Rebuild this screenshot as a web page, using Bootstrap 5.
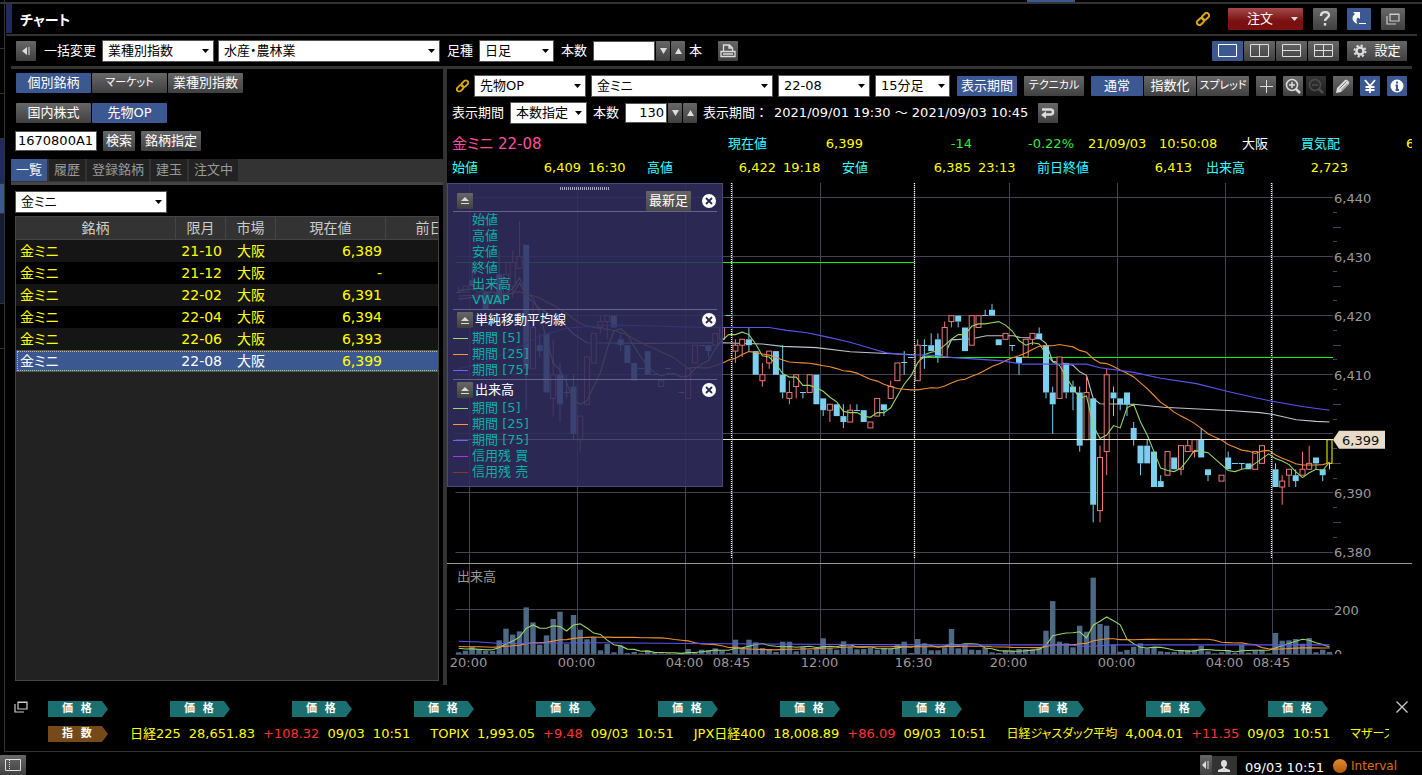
<!DOCTYPE html>
<html lang="ja">
<head>
<meta charset="utf-8">
<meta name="viewport" content="width=device-width, initial-scale=1">
<title>チャート</title>
<link href="https://cdn.jsdelivr.net/npm/bootstrap@5.3.0/dist/css/bootstrap.min.css" rel="stylesheet">
<style>
:root{--line:#333;--blue:#3c5890;--navy:#202a5c}
body{background:#000;color:#fff;font:13px/20px "DejaVu Sans","Noto Sans CJK JP",sans-serif;font-feature-settings:"palt";overflow:hidden}
button,input,select{font-family:inherit;font-feature-settings:inherit}
svg{display:block}
.rail{width:5px;border-right:1px solid var(--line);padding-top:4px}
.rail div{border-bottom:1px solid var(--line);height:45px}
.rail .r1{background:#202a5c}
.rail .r2{background:#3c5890;height:30px}
.rail .r3{background:#151a35;height:90px}
.strip{height:4px;border-bottom:2px solid var(--line);padding-left:1027px;margin-left:-5px}
.strip div{width:48px;height:2px;background:var(--blue)}
.titlebar{height:32px;margin:0 5px 0 1px;padding-right:12px;border-bottom:2px solid var(--line)}
.titlebar h1{font-size:14px;line-height:32px;height:29px;font-weight:700;border-left:6px solid var(--navy);padding-left:8px;margin:0}
.titlebar .acts{gap:10px}
.b{border:0;padding:0;height:20px;line-height:20px;font-size:13px;color:#fff;text-align:center;background:linear-gradient(#676767,#404040);white-space:nowrap;display:flex;align-items:center;justify-content:center;flex:none;border-radius:1px}
.b.on{background:var(--blue)}
.b.red{background:linear-gradient(#a34a4a,#7a1010 60%);width:75px;height:22px;gap:18px;padding-left:14px}
.b.dim{opacity:.5}
.b.kana{font-size:11px}
.w12{width:12px}.w14{width:14px}.w20{width:20px}.w24{width:24px;height:22px}.w26{width:26px}.w31{width:31px}.w32{width:32px}.w52{width:52px}.w60{width:60px}.w75{width:75px}
.g1{gap:1px}.g3{gap:3px}.g5{gap:5px}.g6{gap:6px}.g7{gap:7px}
.sel{appearance:none;border:1px solid #555;border-radius:0;height:22px;line-height:20px;font-size:13px;padding:0 16px 0 5px;color:#000;flex:none;
background:#fff url("data:image/svg+xml,%3Csvg xmlns='http://www.w3.org/2000/svg' width='7' height='4'%3E%3Cpath d='M0 0h7L3.5 4z'/%3E%3C/svg%3E") no-repeat right 4px center}
.inp{border:1px solid #555;height:20px;padding:0 2px;font-size:13px;background:#fff;color:#000;flex:none;border-radius:0}
.s75{width:75px}.s77{width:77px}.s92{width:92px}.s112{width:112px}.s152{width:152px}.s182{width:182px}.s222{width:222px}
.i42{width:42px}.i62{width:62px}.i82{width:82px}
.toolbar{height:33px;padding:0 5px 0 5px;margin:0 10px 0 6px;border-bottom:3px solid var(--line)}
.toolbar label{padding:0 6px 0 7px}
.leftpane{width:436px;margin-left:6px;border-right:4px solid var(--line)}
.leftpane .rows{padding:4px 5px 8px;display:grid;gap:10px}
.leftpane .rows .find{margin:-2px 0 0 -1px}
.tabsbar{background:#333;height:26px;border-bottom:3px solid #444;gap:2px}
.tabsbar button{border:0;background:#222;color:#999;font-size:13px;line-height:22px;height:22px;padding:0 5px}
.tabsbar button.on{background:var(--blue);color:#fff}
.pick{padding:6px 4px 0}
.listbox{margin:3px 4px 4px;border:1px solid #444;background:#222;overflow:hidden}
.grid{table-layout:fixed;width:472px;font-size:14px;line-height:22px;border-collapse:separate;border-spacing:0}
.grid th{font-weight:400;height:22px;background:#333;color:#ccc;text-align:center;padding:0;border-right:1px solid #444;border-bottom:1px solid #444}
.grid td{height:22px;padding:0 4px;color:#ff0;background:#151515}
.grid tr:nth-child(even) td{background:#000}
.grid td:nth-child(3){padding-left:11px}
.grid td:nth-child(2){padding-left:0}
.grid tr.cur td{background:var(--blue);color:#fff}
.grid tr.cur td:nth-child(4){color:#ff0}
.grid tr.cur{outline:1px dotted #d8b878;outline-offset:-2px}
.rightpane{min-width:0;margin-right:10px}
.chartbar{padding:4px 5px 0 5px;height:30px}
.chartbar.second{padding-top:0;height:27px}
.wide{font-feature-settings:normal}
.quotes{padding:6px 0 3px}
.quote{height:24px;line-height:24px;padding-left:5px;white-space:nowrap;overflow:hidden;color:#ff0}
.quote span{flex:none}
.cy{color:#3ff}.gr{color:#3e3}
.pink{color:#ff4fa0;width:276px;font-size:15px}
.q55{width:55px}.q66{width:66px;padding-left:7px}.q59{width:59px}.q74{width:74px}.q78{width:78px}.q85{width:85px}.q64{width:64px}.q70{width:70px}.q92{width:92px}.q102{width:102px}.q109{width:109px}.q71{width:71px}.q83{width:83px}.q105{width:105px}
.pl14{padding-left:14px}
.chart{min-height:300px}
.legendbox{top:0;left:0;width:276px;height:304px;padding:0 5px;background:rgba(49,46,94,.88);border:1px solid #4a4880;color:#fff}
.legendbox .grip{left:112px;top:3px;width:50px;height:3px;background:repeating-linear-gradient(90deg,#aab 0 1px,transparent 1px 2px)}
.legendbox .hd{height:20px;gap:2px;padding:0 1px 0 4px}
.legendbox .hd.first{height:27px;padding-top:6px}
.legendbox ul{list-style:none;margin:0;padding:0 0 1px;line-height:16px;color:#0aafa5;border-bottom:1px solid #66648f}
.legendbox section:first-of-type ul{border-top:1px solid #66648f}
.legendbox section:last-of-type ul{border:0}
.legendbox li{display:flex;align-items:center;gap:4px;height:16px}
.legendbox li i{width:15px;height:1px}
.c5{background:#9d6}.c25{background:#f93}.c75{background:#66f}.cb{background:#a3e}.cs{background:#853d18}
.x{border:0;padding:0;background:none}
.b.w16{width:16px;height:16px}
.b.w45{width:45px;margin-right:9px;background:linear-gradient(#666,#484848)}
.ticker{height:67px;border-bottom:1px solid var(--line);padding:16px 14px 0 9px;gap:20px}
.tag{width:60px;height:16px;line-height:16px;font-size:11px;font-weight:700;padding-left:14px;white-space:pre;background:#1a7070;color:#fff;clip-path:polygon(0 0,54px 0,100% 50%,54px 100%,0 100%);flex:none}
.tag.br{background:#754a18}
.tags{gap:62px;overflow:hidden;height:16px}
.second-line{margin-top:7px}
.idx{gap:20px;overflow:hidden;white-space:nowrap;color:#ff0;margin-left:22px;margin-right:7px}
.idx>span{flex:none;display:flex;gap:8px}
.idx b{font-weight:400}
.idx .kana{font-size:12px}
.idx em{color:#f33;font-style:normal}
.ticker .close{margin-left:-20px}
.foot{height:23px;padding-right:25px}
.foot .dot{width:14px;height:14px;border-radius:50%;background:linear-gradient(#e08a30,#b05a08);margin:0 4px 0 9px}
.foot .int{color:#dd7008;font-size:12px}
.foot .u{width:25px;height:19px;background:#333}
text{font-size:13px;fill:#999}
</style>
</head>
<body>
<div class="d-flex flex-column vh-100">
<div class="d-flex flex-grow-1" style="min-height:0">
<div class="rail flex-shrink-0" aria-hidden="true"><div></div><div></div><div></div><div class="r1"></div><div class="r2"></div><div class="r3"></div><div></div></div>
<div class="flex-grow-1 d-flex flex-column" style="min-width:0">
<div class="strip"><div></div></div>
<header class="titlebar d-flex align-items-start">
<h1>チャート</h1>
<div class="acts ms-auto d-flex align-items-center pt-1">
<svg class="me-2" width="14" height="14"><use href="#lnk"/></svg>
<button class="b red">注文 <svg width="7" height="4"><path d="M0 0h7L3.5 4z" fill="#ddd"/></svg></button>
<button class="b w24" aria-label="ヘルプ"><svg width="14" height="16" fill="none" stroke="#ddd" stroke-width="2.4"><path d="M3 5c0-5 8-5 8-1 0 3-4 3-4 6"/><path d="M7 12v2.600"/></svg></button>
<button class="b w24 on" aria-label="縮小"><svg width="16" height="14"><path d="M2 0h7v7L7 5.500C5 7 5 9 6.500 12 1 10 0 5 4 2z" fill="#fff"/><path d="M8 11.500h7" stroke="#fff"/></svg></button>
<button class="b w24" aria-label="別窓"><svg width="14" height="12"><use href="#win"/></svg></button>
</div>
</header>
<div class="toolbar d-flex align-items-center">
<button class="b w20 me-1" aria-label="閉じる"><svg width="8" height="8"><path d="M5 0v8L0 4zM6.500 0h1v8h-1z" fill="#ddd"/></svg></button>
<label class="ps-1" for="a1">一括変更</label>
<select id="a1" class="sel s112"><option>業種別指数</option></select>
<select class="sel s222 ms-1" aria-label="業種"><option>水産・農林業</option></select>
<label for="a2">足種</label>
<select id="a2" class="sel s75"><option>日足</option></select>
<label for="a3">本数</label>
<div class="d-flex g1 me-1"><input id="a3" class="inp i62"><button class="b w14" aria-label="減らす"><svg width="7" height="6"><path d="M0 0h7L3.500 6z" fill="#ddd"/></svg></button><button class="b w14" aria-label="増やす"><svg width="7" height="6"><path d="M0 6h7L3.500 0z" fill="#ddd"/></svg></button></div>
<span>本</span>
<button class="b w20 ms-3" aria-label="印刷"><svg width="16" height="14" fill="none" stroke="#ddd" stroke-width="1.300"><path d="M3.500 7V1h6l3 3v3M9 1v3h3M1 7.500h14v5H1zM3 10h10"/></svg></button>
<div class="ms-auto d-flex g1">
<button class="b w31 on" aria-label="1画面"><svg width="20" height="14" fill="none" stroke="#fff"><path d="M.5.5h18v12H.5z"/></svg></button>
<button class="b w31" aria-label="2列"><svg width="20" height="14" fill="none" stroke="#ddd"><path d="M.5.5h18v12H.5zM9.500.5v12"/></svg></button>
<button class="b w31" aria-label="2行"><svg width="20" height="14" fill="none" stroke="#ddd"><path d="M.5.5h18v12H.5zM.5 6.500h18"/></svg></button>
<button class="b w31" aria-label="4画面"><svg width="20" height="14" fill="none" stroke="#ddd"><path d="M.5.5h18v12H.5zM9.500.5v12M.5 6.500h18"/></svg></button>
</div>
<button class="b w60 ms-2 g7"><svg width="14" height="14"><circle cx="7" cy="7" r="3.500" fill="none" stroke="#ddd" stroke-width="2.500"/><circle cx="7" cy="7" r="5.500" fill="none" stroke="#ddd" stroke-width="2" stroke-dasharray="2.200 2.120"/></svg> 設定</button>
</div>
<main class="d-flex flex-grow-1" style="min-height:0">
<aside class="leftpane flex-shrink-0 d-flex flex-column">
<div class="rows">
<div class="d-flex g1"><button class="b w75 on">個別銘柄</button><button class="b w75 kana">マーケット</button><button class="b w75">業種別指数</button></div>
<div class="d-flex g1"><button class="b w75">国内株式</button><button class="b w75 on">先物OP</button></div>
<div class="d-flex g6 find"><input class="inp i82" value="1670800A1" aria-label="銘柄コード"><button class="b w32">検索</button><button class="b w60">銘柄指定</button></div>
</div>
<nav class="tabsbar d-flex"><button class="on">一覧</button><button>履歴</button><button>登録銘柄</button><button>建玉</button><button>注文中</button></nav>
<div class="pick"><select class="sel s152" aria-label="商品"><option>金ミニ</option></select></div>
<div class="listbox flex-grow-1">
<table class="grid"><colgroup><col style="width:160px"><col style="width:50px"><col style="width:50px"><col style="width:110px"><col style="width:102px"></colgroup>
<thead><tr><th>銘柄</th><th>限月</th><th>市場</th><th>現在値</th><th>前日比</th></tr></thead>
<tbody>
<tr><td>金ミニ</td><td class="text-end">21-10</td><td>大阪</td><td class="text-end">6,389</td><td></td></tr>
<tr><td>金ミニ</td><td class="text-end">21-12</td><td>大阪</td><td class="text-end">-</td><td></td></tr>
<tr><td>金ミニ</td><td class="text-end">22-02</td><td>大阪</td><td class="text-end">6,391</td><td></td></tr>
<tr><td>金ミニ</td><td class="text-end">22-04</td><td>大阪</td><td class="text-end">6,394</td><td></td></tr>
<tr><td>金ミニ</td><td class="text-end">22-06</td><td>大阪</td><td class="text-end">6,393</td><td></td></tr>
<tr class="cur"><td>金ミニ</td><td class="text-end">22-08</td><td>大阪</td><td class="text-end">6,399</td><td></td></tr>
</tbody></table>
</div>
</aside>
<section class="rightpane flex-grow-1 d-flex flex-column">
<div class="chartbar d-flex align-items-center">
<div class="d-flex g5 align-items-center"><svg class="ms-1" width="13" height="14" viewBox="0 0 14 14"><use href="#lnk"/></svg><select class="sel s112" aria-label="種別"><option>先物OP</option></select><select class="sel s182" aria-label="商品名"><option>金ミニ</option></select><select class="sel s92" aria-label="限月"><option>22-08</option></select><select class="sel s75" aria-label="足"><option>15分足</option></select></div>
<div class="d-flex g7 ms-auto">
<button class="b w60 on">表示期間</button><button class="b w60 kana">テクニカル</button>
<div class="d-flex g1"><button class="b w52 on">通常</button><button class="b w52">指数化</button><button class="b w52 kana">スプレッド</button></div>
<button class="b w20" aria-label="十字"><svg width="14" height="14" stroke="#ddd"><path d="M7.500 1v13M1 7.500h13"/></svg></button>
<div class="d-flex g3"><button class="b w20" aria-label="拡大"><svg width="16" height="16" fill="none" stroke="#ddd" stroke-width="1.500"><circle cx="7" cy="7" r="5.500"/><path d="M11 11l4 4" stroke-width="2.500"/><path d="M4 7h6M7 4v6"/></svg></button><button class="b w20 dim" aria-label="縮小表示"><svg width="16" height="16" fill="none" stroke="#999" stroke-width="1.500"><circle cx="7" cy="7" r="5.500"/><path d="M11 11l4 4" stroke-width="2.500"/><path d="M4 7h6"/></svg></button></div>
<button class="b w20" aria-label="描画"><svg width="16" height="16"><path d="M1 15l1-5 8-8c2-1 5 2 4 4l-8 8z" fill="#ddd"/><path d="M4.500 10.500l7-7M6 12.500l7-7" stroke="#666" stroke-width=".8"/></svg></button>
<button class="b w20 on" aria-label="円"><svg width="14" height="14" fill="none" stroke="#fff" stroke-width="1.800"><path d="M2 1l5 6 5-6M7 7v7M2.500 8h9M2.500 11h9"/></svg></button>
<button class="b w20 on" aria-label="情報"><svg width="14" height="14"><circle cx="7" cy="7" r="6.500" fill="#fff"/><path d="M7 2.500v2M5.500 6.500H7v4M5.500 11H9" stroke="#3c5890" stroke-width="2" fill="none"/></svg></button>
</div>
</div>
<div class="chartbar second d-flex align-items-center g6">
<label for="p1">表示期間</label><select id="p1" class="sel s77"><option>本数指定</option></select>
<label for="p2">本数</label><div class="d-flex g1"><input id="p2" class="inp i42 text-end" value="130"><button class="b w14" aria-label="減らす"><svg width="7" height="6"><path d="M0 0h7L3.500 6z" fill="#ddd"/></svg></button><button class="b w14" aria-label="増やす"><svg width="7" height="6"><path d="M0 6h7L3.500 0z" fill="#ddd"/></svg></button></div>
<span class="text-nowrap wide">表示期間：</span><span class="text-nowrap wide">2021/09/01 19:30 ～ 2021/09/03 10:45</span>
<button class="b w20 ms-1" aria-label="戻す"><svg width="14" height="12" fill="none" stroke="#ddd" stroke-width="2.500"><path d="M1 2.500h8.500a2.500 2.500 0 010 5H4"/><path d="M5 4L0 8l5 3.500z" fill="#ddd" stroke="none"/></svg></button>
</div>
<div class="quotes">
<div class="quote d-flex"><span class="pink">金ミニ 22-08</span><span class="q64 cy">現在値</span><span class="q71 text-end">6,399</span><span class="q109 text-end gr">-14</span><span class="q102 text-end gr">-0.22%</span><span class="q85 pl14">21/09/03</span><span class="q83">10:50:08</span><span class="q59 text-white">大阪</span><span class="q105 cy">買気配</span><span>6,398</span></div>
<div class="quote d-flex"><span class="q55 cy">始値</span><span class="q74 text-end">6,409</span><span class="q66">16:30</span><span class="q55 cy">高値</span><span class="q74 text-end">6,422</span><span class="q66">19:18</span><span class="q55 cy">安値</span><span class="q74 text-end">6,385</span><span class="q66">23:13</span><span class="q85 cy">前日終値</span><span class="q70 text-end">6,413</span><span class="q64 cy pl14">出来高</span><span class="q92 text-end">2,723</span></div>
</div>
<div class="chart flex-grow-1 position-relative" id="chart">
<svg id="plot" class="position-absolute w-100 h-100" role="img" aria-label="金ミニ 15分足チャート"></svg>
<div class="legendbox position-absolute">
<div class="grip position-absolute"></div>
<section><div class="hd first d-flex align-items-center"><button class="b w16" aria-label="最小化"><svg width="10" height="9"><use href="#ej"/></svg></button><button class="b w45 ms-auto">最新足</button><button class="x" aria-label="消す"><svg width="14" height="14"><use href="#cx"/></svg></button></div>
<ul><li><i></i>始値</li><li><i></i>高値</li><li><i></i>安値</li><li><i></i>終値</li><li><i></i>出来高</li><li><i></i>VWAP</li></ul></section>
<section><div class="hd d-flex align-items-center"><button class="b w16" aria-label="最小化"><svg width="10" height="9"><use href="#ej"/></svg></button><span>単純移動平均線</span><button class="x ms-auto" aria-label="消す"><svg width="14" height="14"><use href="#cx"/></svg></button></div>
<ul><li><i class="c5"></i>期間 [5]</li><li><i class="c25"></i>期間 [25]</li><li><i class="c75"></i>期間 [75]</li></ul></section>
<section><div class="hd d-flex align-items-center"><button class="b w16" aria-label="最小化"><svg width="10" height="9"><use href="#ej"/></svg></button><span>出来高</span><button class="x ms-auto" aria-label="消す"><svg width="14" height="14"><use href="#cx"/></svg></button></div>
<ul><li><i class="c5"></i>期間 [5]</li><li><i class="c25"></i>期間 [25]</li><li><i class="c75"></i>期間 [75]</li><li><i class="cb"></i>信用残 買</li><li><i class="cs"></i>信用残 売</li></ul></section>
</div>
</div>
</section>
</main>
<div class="ticker d-flex">
<svg class="flex-shrink-0" width="14" height="12"><use href="#win"/></svg>
<div class="flex-grow-1" style="min-width:0">
<div class="tags d-flex"><span class="tag">価  格</span><span class="tag">価  格</span><span class="tag">価  格</span><span class="tag">価  格</span><span class="tag">価  格</span><span class="tag">価  格</span><span class="tag">価  格</span><span class="tag">価  格</span><span class="tag">価  格</span><span class="tag">価  格</span><span class="tag">価  格</span></div>
<div class="second-line d-flex align-items-center"><span class="tag br">指  数</span>
<div class="idx d-flex"><span><b>日経225</b><b>28,651.83</b><em>+108.32</em><b>09/03</b><b>10:51</b></span><span><b>TOPIX</b><b>1,993.05</b><em>+9.48</em><b>09/03</b><b>10:51</b></span><span><b>JPX日経400</b><b>18,008.89</b><em>+86.09</em><b>09/03</b><b>10:51</b></span><span><b class="kana">日経ジャスダック平均</b><b>4,004.01</b><em>+11.35</em><b>09/03</b><b>10:51</b></span><span class="kana">マザーズ</span></div></div>
</div>
<button class="x close align-self-start" aria-label="閉じる"><svg width="12" height="12" stroke="#ccc" stroke-width="1.300"><path d="M.5.5l11 11M11.500.5l-11 11"/></svg></button>
</div>
</div>
</div>
<footer class="foot d-flex align-items-center">
<button class="b w26 align-self-end" aria-label="パネル"><svg width="16" height="12" fill="none" stroke="#ddd"><path d="M.5.5h15v11H.5z"/><path d="M4.500 1v10" stroke-dasharray="1 1"/></svg></button>
<button class="b w12 ms-auto align-self-end" aria-label="開く"><svg width="7" height="8"><path d="M4 0v8L0 4zM5.500 0h1v8h-1z" fill="#ddd"/></svg></button>
<div class="u d-flex align-items-center justify-content-center align-self-end"><svg width="12" height="12"><ellipse cx="6" cy="3.500" rx="3" ry="3.500" fill="#ddd"/><path d="M5 6h2v2l5 2v2H0v-2l5-2z" fill="#ddd"/></svg></div>
<span class="pt-2 ps-2 text-nowrap">09/03 10:51</span>
<span class="dot mt-1"></span><span class="int pt-1">Interval</span>
</footer>
</div>
<svg width="0" height="0" class="position-absolute">
<symbol id="lnk" viewBox="0 0 14 14"><g fill="none" stroke="#d9a514" stroke-width="2"><rect x="5.500" y="2" width="8" height="5" rx="2.500" transform="rotate(-45 9.500 4.500)"/><rect x=".5" y="7" width="8" height="5" rx="2.500" transform="rotate(-45 4.500 9.500)"/></g></symbol>
<symbol id="win" viewBox="0 0 14 12"><path d="M4 1h9v7H4zM1 3v8h9M4 1.500h9" fill="none" stroke="#ccc" stroke-width="1.200"/></symbol>
<symbol id="ej" viewBox="0 0 10 9"><path d="M1 5l4-4 4 4zM1 7h8v1H1z" fill="#ddd"/></symbol>
<symbol id="cx" viewBox="0 0 14 14"><circle cx="7" cy="7" r="7" fill="#fff"/><path d="M4 4l6 6M10 4l-6 6" stroke="#2a2850" stroke-width="1.800"/></symbol>
</svg>
<script src="https://cdn.jsdelivr.net/npm/bootstrap@5.3.0/dist/js/bootstrap.bundle.min.js"></script>
<script>
// open,close[,high,low] as offsets from 6400; empty = no trade
const raw = `24,24,25,24|24,25|26,25,29,25|24,25|24,21|22,24|27,22,31,22|23,27,29,23|25,29,31,23|28,30,36,28|32,11,32,4|11,18,22,11|15,14,17,13|17,7|6,10,16,3|10,5,12,2|7,7,10,6|8,0,10,-1|-1,3,3,-3|5,13|12,17|18,19,20,17|19,20,20,16|20,18|16,15,17,14|15,12|12,9|11,11|14,10|10,10|8,9|11,11||7,7|6,11|12,15|15,15|15,14,15,13|15,17|16,18|20,20|14,15,16,12|15,16,16,13|16,15,18,14|14,10|9,10,12,8|12,14,14,11|14,10|10,7,15,6|6,7,9,5|8,10,10,6|7,7,7,6|7,10|10,5|6,4,6,3|4,5,5,2|5,3|3,2,5,1|2,4,5,2|4,4,5,4|4,2|1,2|3,6|5,4,5,3|6,8,9,6|9,12|12,12,14,10|13,13|9,15,16,9|15,15,16,11|15,14,17,14|16,13,17,12|13,18,19,13|19,20,20,18|20,19,20,18|18,14|15,20|18,20|20,20,21,20|21,20,22,20|16,15|16,17|15,15,15,14|13,12,13,10|13,16|16,17,17,15|17,16,18,16|15,7,15,6|7,5,8,0|6,13|12,7,12,6|8,7,9,4|7,-2,8,-3|-1,7,10,-1|6,-12,6,-15|-13,-4,-2,-15|-3,10,11,-7|7,6,8,3|6,5,6,4|7,5,7,3|1,-1,2,-2|-2,-5,-2,-7|-2,-5,-1,-5|-3,-9|-8,-9,-7,-9|-7,-3|-4,-6|-6,-2,-2,-7|-3,-2,-1,-3|-3,-1,-1,-4|-1,-4,1,-4|-6,-7,-6,-8||-8,-7|-4,-6,-3,-6|-5,-5|-5,-5,-5,-6|-5,-6|-6,-3|-5,-2|-1,-1|-6,-9,-5,-9|-9,-8,-7,-12|-7,-6,-6,-9|-7,-8,-6,-9|-7,-6,-3,-7|-6,-5,-2,-6|-4,-5,-4,-6|-6,-7,-6,-8|-5,-1,-1,-6`;
const vol = [5,10,22,15,9,9,41,76,58,68,140,95,28,56,105,127,30,117,73,44,50,11,30,5,25,3,6,2,10,3,2,2,0,2,15,3,13,12,17,10,3,43,18,43,35,18,14,6,37,37,8,22,12,18,47,18,13,38,23,14,15,18,13,18,15,28,37,3,45,32,11,11,20,75,17,30,13,12,18,5,3,9,8,15,14,13,18,70,159,37,32,20,85,67,229,90,85,28,7,12,22,32,17,20,8,6,6,12,11,12,25,8,2,5,12,3,28,4,10,12,2,63,40,41,45,31,48,5,13,6].map(v => v * 1.5);
const ma75 = [[0,11],[4,12.1],[8,14.2],[12,16.5],[16,17.9],[20,18.2],[23,18.4],[28,18.3],[33,18.1],[39,18],[46,18],[48.6,17.5],[51.6,17.1],[54.5,16.4],[58,15.5],[61,14.5],[63.4,13.7],[66.4,13.4],[70.3,13.3],[73.3,12.9],[80.2,12.4],[83.6,11.8],[93,11.8],[95,11.2],[100,10.4],[104,9.4],[109.3,8.5],[113.8,7.2],[117.7,6.2],[120.5,5.5],[125.2,4.6],[129,4]];
const vwap = [[0,22.8],[3,23.2],[8,23.7],[9,25.5],[10,23.4],[12,21.2],[15,19.2],[17,16.9],[19,15.4],[28,15.3],[39,15.4],[45,15.2],[48,14.8],[53,14.6],[58,13.9],[63.4,13.6],[67.5,13.4],[68,12.3],[69,13],[72,13.4],[73,15.9],[76,16.1],[78.2,16.6],[82.2,16.6],[83.2,16.3],[86,16.2],[87,15.3],[88,12.3],[91,11.6],[92,10.5],[93,9.9],[94,6],[95,5.1],[100,5],[104.4,4.5],[114.8,3.9],[118.7,3.6],[120.5,3.3],[124.1,2.4],[127,2.1],[129,2]];
const vma75 = [[0,57],[3,54],[7,46],[11,48],[20,51],[40,46],[70,41],[90,41],[93,34],[97,41],[129,41]];
const times = [[2,'20:00'],[18,'00:00'],[34,'04:00'],[41,'08:45'],[54,'12:00'],[68,'16:30'],[82,'20:00'],[98,'00:00'],[114,'04:00'],[121,'08:45']];
const bars = raw.split('|').map(s => s ? s.split(',').map(Number) : null);
let last = 24;
const closes = bars.map(b => last = b ? b[1] : last);
const sma = (a, n, pad) => a.map((_, i) => { let s = 0; for (let k = i - n + 1; k <= i; k++) s += k < 0 ? pad : a[k]; return [i, s / n]; });

function draw() {
  const box = document.getElementById('chart'), W = box.clientWidth, H = box.clientHeight;
  const L = 8.5, step = (W - 87.5) / bars.length, R = L + step * bars.length;
  const sep = Math.round(H - 122) + .5, top = 14.5, unit = (sep - 11.5 - top) / 60, base = H - 31;
  const Y = p => top + (40 - p) * unit, X = i => L + 3.2 + step * i, V = v => base - v * .222;
  const r = v => Math.round(v) + .5;
  let o = '';
  const ln = (x1, y1, x2, y2, c, e = '') => o += `<path d="M${x1} ${y1}L${x2} ${y2}" stroke="${c}" fill="none" ${e}/>`;
  const row = (x1, y, x2, c) => o += `<rect x="${x1}" y="${Math.floor(y)}" width="${x2 - x1}" height="1" fill="${c}"/>`;
  const poly = (pts, f, c) => o += `<polyline fill="none" stroke="${c}" stroke-width="1.1" points="${pts.map(([i, v]) => X(i).toFixed(1) + ',' + f(v).toFixed(1)).join(' ')}"/>`;
  for (let p = -20; p <= 40; p += 10) ln(L, r(Y(p) - .5), R, r(Y(p) - .5), '#444452');
  ln(L, r(V(200) - .5), R, r(V(200) - .5), '#444452');
  ln(L, r(base), R, r(base), '#444452');
  for (let k = -17.5; k <= 40; k += 2.5) if (k % 10) { const y = r(Y(k) - .5); ln(R, y, R + (k % 5 ? 4 : 8), y, '#444452'); }
  times.forEach(([i, t]) => {
    const x = r(L + i * step - .3);
    ln(x, 0, x, base, '#444452');
    o += `<text x="${x - 1}" y="${base + 13}" text-anchor="middle">${t}</text>`;
  });
  [41, 68, 121].forEach(i => { const x = r(L + i * step - .9); ln(x, 0, x, sep - 5, '#fff', 'stroke-dasharray="1 1" stroke-width="1.3"'); });
  vol.forEach((v, i) => { if (v) o += `<rect x="${(X(i) - 2.7).toFixed(1)}" y="${V(v).toFixed(1)}" width="5.4" height="${(v * .222).toFixed(1)}" fill="#4d6985"/>`; });
  const nx = L + 68 * step - .5;
  row(L, r(Y(29) - .5), nx, '#00ff00');
  row(nx, r(Y(13) - .5), R, '#00ff00');
  poly(vwap, Y, '#bcc5cc');
  bars.forEach((b, i) => {
    if (!b) return;
    const [op, cl, h = Math.max(op, cl), l = Math.min(op, cl)] = b, x = X(i), end = i === bars.length - 1;
    const hi = Y(Math.max(op, cl)), lo = Y(Math.min(op, cl));
    const c = end ? '#ff0' : cl > op ? '#f07878' : '#7bd0f0';
    ln(x.toFixed(1), Y(h), x.toFixed(1), hi, c); ln(x.toFixed(1), lo, x.toFixed(1), Y(l), c);
    if (cl > op) o += `<rect x="${(x - 2.5).toFixed(1)}" y="${hi}" width="5" height="${lo - hi}" fill="#000" stroke="${c}"/>`;
    else if (cl < op) o += `<rect x="${(x - 3).toFixed(1)}" y="${hi}" width="6" height="${lo - hi}" fill="${c}"/>`;
    else ln(x - 3, r(hi - .5), x + 3, r(hi - .5), c);
  });
  poly(sma(closes, 5, 24.3), Y, '#98d468');
  poly(sma(closes, 25, 23.3), Y, '#ee8e32');
  poly(ma75, Y, '#5a55ee');
  poly(sma(vol, 5, 30), V, '#98d468');
  poly(sma(vol, 25, 35), V, '#ee8e32');
  poly(vma75, V, '#5a55ee');
  row(L, r(Y(-1) - .5), R, '#f2ead0');
  ln(0, sep, W, sep, '#999');
  [40, 30, 20, 10, -10, -20].forEach(p => o += `<text x="${R + 1}" y="${Y(p) + 5}">6,${400 + p}</text>`);
  o += `<text x="${R + 1}" y="${V(200) + 5}">200</text>`;
  o += `<clipPath id="zc"><rect x="${R}" y="${base - 8}" width="40" height="8"/></clipPath><text clip-path="url(#zc)" x="${R + 1}" y="${base + 5}">0</text>`;
  o += `<text x="10" y="${sep + 17}">出来高</text>`;
  const ty = Y(-1);
  o += `<path d="M${R} ${ty}l6-9h46v18h-46z" fill="#e8dcc8"/><text x="${R + 9}" y="${ty + 5}" style="fill:#111">6,399</text>`;
  document.getElementById('plot').innerHTML = o;
}
draw();
addEventListener('resize', draw);
</script>
</body>
</html>
